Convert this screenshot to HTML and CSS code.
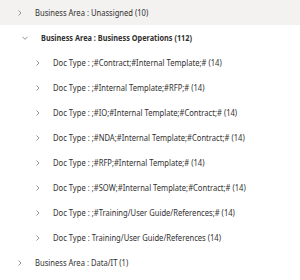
FILE: index.html
```html
<!DOCTYPE html>
<html lang="en">
<head>
    <meta charset="UTF-8">
    <title>Group tree</title>
    <link rel="stylesheet" href="styles.css">
</head>
<body>
    <div class="tree">
        <div class="row hover lvl0">
            <svg class="chev" viewBox="0 0 8 8"><path d="M2.5 1.5 L5 4 L2.5 6.5"/></svg>
            <span class="label">Business Area : Unassigned (10)</span>
        </div>
        <div class="row lvl1">
            <svg class="chev open" viewBox="0 0 8 8"><path d="M1.5 2.8 L4 5.3 L6.5 2.8"/></svg>
            <span class="label bold">Business Area : Business Operations (112)</span>
        </div>
        <div class="row lvl2">
            <svg class="chev" viewBox="0 0 8 8"><path d="M2.5 1.5 L5 4 L2.5 6.5"/></svg>
            <span class="label">Doc Type : ;#Contract;#Internal Template;# (14)</span>
        </div>
        <div class="row lvl2">
            <svg class="chev" viewBox="0 0 8 8"><path d="M2.5 1.5 L5 4 L2.5 6.5"/></svg>
            <span class="label">Doc Type : ;#Internal Template;#RFP;# (14)</span>
        </div>
        <div class="row lvl2">
            <svg class="chev" viewBox="0 0 8 8"><path d="M2.5 1.5 L5 4 L2.5 6.5"/></svg>
            <span class="label">Doc Type : ;#IO;#Internal Template;#Contract;# (14)</span>
        </div>
        <div class="row lvl2">
            <svg class="chev" viewBox="0 0 8 8"><path d="M2.5 1.5 L5 4 L2.5 6.5"/></svg>
            <span class="label">Doc Type : ;#NDA;#Internal Template;#Contract;# (14)</span>
        </div>
        <div class="row lvl2">
            <svg class="chev" viewBox="0 0 8 8"><path d="M2.5 1.5 L5 4 L2.5 6.5"/></svg>
            <span class="label">Doc Type : ;#RFP;#Internal Template;# (14)</span>
        </div>
        <div class="row lvl2">
            <svg class="chev" viewBox="0 0 8 8"><path d="M2.5 1.5 L5 4 L2.5 6.5"/></svg>
            <span class="label">Doc Type : ;#SOW;#Internal Template;#Contract;# (14)</span>
        </div>
        <div class="row lvl2">
            <svg class="chev" viewBox="0 0 8 8"><path d="M2.5 1.5 L5 4 L2.5 6.5"/></svg>
            <span class="label">Doc Type : ;#Training/User Guide/References;# (14)</span>
        </div>
        <div class="row lvl2">
            <svg class="chev" viewBox="0 0 8 8"><path d="M2.5 1.5 L5 4 L2.5 6.5"/></svg>
            <span class="label">Doc Type : Training/User Guide/References (14)</span>
        </div>
        <div class="row lvl0">
            <svg class="chev" viewBox="0 0 8 8"><path d="M2.5 1.5 L5 4 L2.5 6.5"/></svg>
            <span class="label">Business Area : Data/IT (1)</span>
        </div>
    </div>
</body>
</html>
```
FILE: styles.css
```css
body {
    margin: 0;
    background: #fff;
    font-family: "Noto Sans", "Open Sans", sans-serif;
    font-size: 9px;
    color: #323130;
}
.row {
    display: flex;
    align-items: center;
    height: 25px;
    white-space: nowrap;
}
.row.hover {
    background: #f3f2f1;
}
.lvl0 { padding-left: 16px; }
.lvl1 { padding-left: 21px; }
.lvl2 { padding-left: 34px; }
.chev {
    flex-shrink: 0;
    width: 8px;
    height: 8px;
    margin-right: 11px;
    fill: none;
    stroke: #8a8886;
    stroke-width: 0.9;
}
.chev.open {
    margin-right: 12px;
}
/* screenshot text runs narrow, squeeze it sideways */
.label {
    display: inline-block;
    transform: scaleX(0.845);
    transform-origin: left center;
}
.bold {
    font-weight: 700;
    transform: scaleX(0.815);
}
```
